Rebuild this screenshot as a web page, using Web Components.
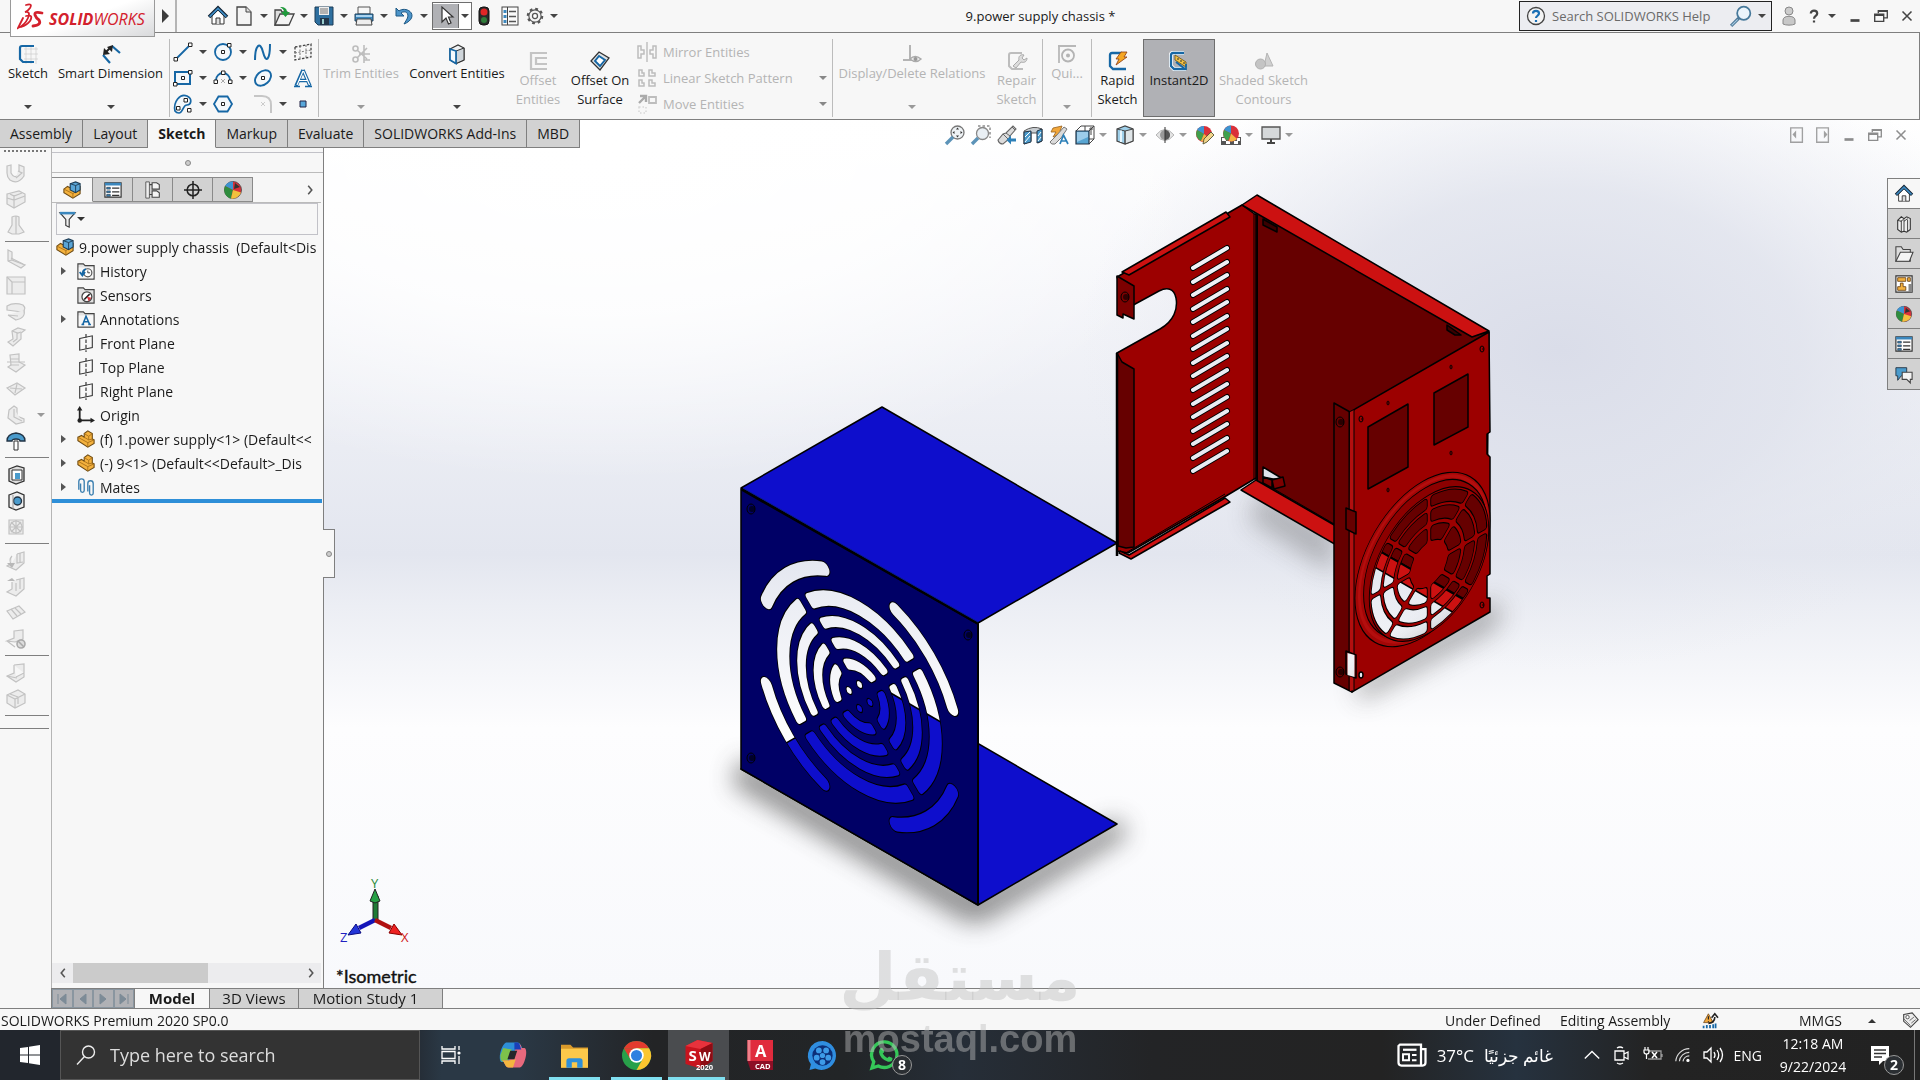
<!DOCTYPE html>
<html lang="en">
<head>
<meta charset="utf-8">
<title>SOLIDWORKS Premium 2020</title>
<style>
  html, body { height: 100%; margin: 0; }
  body {
    font: 14px/19px "Open Sans", "Noto Sans", sans-serif;
    color: #1a1a1a;
    background: #f7f7f7;
    overflow: hidden;
  }
</style>
</head>
<body>
<app-shell></app-shell>

<script>
const ICONS = {
  // title bar
  home: `<path d="M4 10v8h12v-8l-6-6z" fill="#fff" stroke="#333"/><path d="M8 18v-6h4v6" fill="#ddd" stroke="#333"/><path d="M1 11l9-9 9 9" fill="none" stroke="#123" stroke-width="3.6"/><path d="M1.600 10.600L10 2.400l8.400 8.200" fill="none" stroke="#3f8cc4" stroke-width="1.800"/>`,
  newdoc: `<path d="M3 1h9l5 5v13H3z" fill="#f4f4f4" stroke="#444" stroke-width="1.300"/><path d="M12 1v5h5" fill="#ddd" stroke="#444"/>`,
  open: `<path d="M1 4h6l1 2h5v13H1z" fill="#ddd" stroke="#444" stroke-width="1.300"/><path d="M1 19L6 8h14l-5 11z" fill="#f3f3f3" stroke="#444" stroke-width="1.300"/><path d="M6 1c5 0 7 2 7 5h3l-4.500 5L7 6h3c0-2-1-3-4-5z" fill="#1f9a3c"/>`,
  save: `<path d="M1 1h18v18H4l-3-3z" fill="#2e6f9f" stroke="#1c3d57"/><path d="M5 1h10v8H5z" fill="#eee"/><path d="M6 3h8M6 5h8M6 7h8" stroke="#777"/><path d="M6 12h9v7H6z" fill="#22364a"/><path d="M8 13h2v5H8z" fill="#9cc"/>`,
  print: `<path d="M4 1h12v7H4z" fill="#f6f6f6" stroke="#555"/><path d="M1 8h18v7H1z" fill="#3b87bd" stroke="#23435c"/><path d="M2 10h16" stroke="#a9d2ee" stroke-width="2"/><path d="M3 13h14l1 6H2z" fill="#eee" stroke="#444"/>`,
  undo: `<path d="M2 2v8h8L7 7c4-3 9 0 6 6l-3 5c8-3 10-9 6-12.500C13 3 8 2.500 5 5z" fill="#4c94c9" stroke="#1d5884"/>`,
  select: `<path d="M6 1v15l4-4 2.500 6 2.500-1-2.500-6H17z" fill="#fff" stroke="#333" stroke-width="1.200"/>`,
  light: `<rect x="5" y="1" width="10" height="18" rx="4" fill="#2a2a2a" stroke="#111"/><circle cx="10" cy="6" r="3.500" fill="#e02626"/><circle cx="10" cy="14" r="3" fill="#2f7d3a"/>`,
  options: `<rect x="2" y="1" width="16" height="18" fill="#fafafa" stroke="#444"/><path d="M7.500 1v18" stroke="#444"/><path d="M3.500 4h3v3h-3zM3.500 9h3v3h-3zM3.500 14h3v3h-3z" fill="#3b87bd"/><path d="M9 5.500h7M9 10.500h7M9 15.500h7" stroke="#555" stroke-width="1.500"/>`,
  gear: `<circle cx="10" cy="10" r="8" fill="none" stroke="#555" stroke-width="2.400" stroke-dasharray="3.100 3.180"/><circle cx="10" cy="10" r="6.800" fill="#f3f3f3" stroke="#555" stroke-width="1.300"/><circle cx="10" cy="10" r="2.800" fill="#fff" stroke="#555" stroke-width="1.400"/>`,
  help: `<circle cx="10" cy="10" r="8.500" fill="#f4f4f4" stroke="#444" stroke-width="1.300"/><path d="M7 7.500C7 4 13 4 13 7.500c0 2-3 2.500-3 4.500M10 14v2" fill="none" stroke="#1a6fb5" stroke-width="2.200"/>`,
  lens: `<circle cx="12.500" cy="7.500" r="6" fill="#eaf4fb" stroke="#47799b" stroke-width="1.600"/><path d="M8 12l-7 7" stroke="#4d7897" stroke-width="3"/><path d="M7 13l-5.500 5.500" stroke="#a8cbe2"/>`,
  person: `<circle cx="10" cy="5" r="4" fill="#ccc" stroke="#888"/><path d="M4 18v-4c0-5 12-5 12 0v4c-3 1.500-9 1.500-12 0z" fill="#c8c8c8" stroke="#888"/>`,
  question: `<path d="M6 7C6 2 14 2 14 7c0 3-4 3-4 6.500M10 15.500V18" fill="none" stroke="#444" stroke-width="2.800"/>`,
  minimize: `<path d="M5 15h10" stroke="#444" stroke-width="3"/>`,
  restore: `<path d="M7 7V4h10v8h-4" fill="none" stroke="#444" stroke-width="1.500"/><path d="M3 8h10v8H3z" fill="none" stroke="#444" stroke-width="1.500"/><path d="M3 9h10M7 4.500h10" stroke="#444" stroke-width="2"/>`,
  close: `<path d="M5 5l10 10M15 5L5 15" stroke="#444" stroke-width="1.700"/>`,
  // ribbon
  sketch: `<path d="M6 5h14M6 10h14M6 15h14M8 3v17M13 3v17M18 3v17" stroke="#ccc" stroke-width=".7"/><path d="M16 2H4Q2 2 2 4v11l3 3h11" fill="none" stroke="#1667a5" stroke-width="2.200"/>`,
  smartdim: `<path d="M2 11l7 8M11 2l8 7" stroke="#1667a5" stroke-width="2.200"/><path d="M4 9l6-6" stroke="#222" stroke-width="2"/><path d="M2 11l1-7 6 6zM12 1L6 3l5 5z" fill="#222"/>`,
  line: `<path d="M3 17L17 3" stroke="#1667a5" stroke-width="1.800"/><path d="M1 15.500h3.500V19H1zM15.500 1H19v3.500h-3.500z" fill="#fff" stroke="#222"/>`,
  circle: `<circle cx="10" cy="10" r="8" fill="#f4f8fb" stroke="#1667a5" stroke-width="1.800"/><path d="M8.500 8.500h3v3h-3zM14.500 1.500H18V5h-3.500z" fill="#fff" stroke="#222"/>`,
  spline: `<path d="M2 18C2 4 7-2 10 10s7 8 7-8" fill="none" stroke="#1667a5" stroke-width="2"/>`,
  plane: `<path d="M2 5l16-3v13L2 18z" fill="#f8f8f8" stroke="#444" stroke-dasharray="2.500 1.500" stroke-width="1.300"/><path d="M7 4v13M13 3v13M2 11l16-3" stroke="#777" stroke-dasharray="2 1.500"/>`,
  rect: `<path d="M2 4h15v12H2z" fill="#f4f8fb" stroke="#1667a5" stroke-width="2"/><path d="M8.500 8.500h3v3h-3zM15.500 2.500H19V6h-3.500zM.5 14.500H4V18H.5z" fill="#fff" stroke="#222"/>`,
  arc: `<path d="M3 12a7 7 0 0 1 14 0" fill="none" stroke="#1667a5" stroke-width="1.800"/><path d="M1 12h3.500v3.500H1zM15.500 12H19v3.500h-3.500zM8.500 3H12v3.500H8.500z" fill="#fff" stroke="#222"/><path d="M8 11l4 4M12 11l-4 4" stroke="#aaa"/>`,
  ellipse: `<ellipse cx="10" cy="10" rx="9" ry="6.500" transform="rotate(-42 10 10)" fill="#f4f8fb" stroke="#1667a5" stroke-width="1.900"/><path d="M8.500 8.500h3v3h-3z" fill="#fff" stroke="#222"/>`,
  text: `<path d="M10 2L3 18M10 2l7 16M5.500 12.500h9" fill="none" stroke="#1667a5" stroke-width="3.400"/><path d="M10 3L4 17M10.500 3l6 14M6 12.500h8" stroke="#fff" stroke-width="1.200"/><path d="M1 18.500h6M12 18.500h7" stroke="#1667a5" stroke-width="1.600"/>`,
  slot: `<path d="M2 17C0 8 7-1 14 2c6 3 4 9 0 9-4-.5-4 8-8 8-2 0-3-.5-4-2z" fill="#f4f8fb" stroke="#1667a5" stroke-width="1.700"/><path d="M11 4.500h3.500V8H11zM3.500 12.500H7V16H3.500zM14.500 14.500H18V18h-3.500z" fill="#fff" stroke="#222"/>`,
  polygon: `<path d="M5.500 2.500h9L19 10l-4.500 7.500h-9L1 10z" fill="#f4f8fb" stroke="#1667a5" stroke-width="1.800"/><path d="M8.500 8.500h3v3h-3z" fill="#fff" stroke="#222"/>`,
  fillet: `<path d="M1 2h8c6 0 9 3 9 9v8" fill="none" stroke="#c6c6c6" stroke-width="2"/><path d="M8 8l4 4M12 8l-4 4" stroke="#ccc"/>`,
  point: `<path d="M7 7h6v6H7z" fill="#59a7da" stroke="#224"/>`,
  trim: `<g fill="none" stroke="#bdbdbd" stroke-width="1.600"><circle cx="4.500" cy="4.500" r="2.500"/><circle cx="4.500" cy="15.500" r="2.500"/><path d="M6 6l10 9M6 14L16 4M13 1v18M8 10h11M13 16h6"/></g>`,
  convert: `<path d="M3 5l8-4 6 3v12l-8 3.500L3 16z" fill="#eef1f3" stroke="#333" stroke-width="1.200"/><path d="M9 7l8-3v12l-8 3.500z" fill="#cfd5da" stroke="#333"/><path d="M3 5l6 2v12.500L3 16z" fill="#f5fafd" stroke="#1667a5" stroke-width="1.700"/>`,
  offset: `<path d="M19 2H3v16h16M19 7H8v6h11" fill="none" stroke="#c4c4c4" stroke-width="2.200"/>`,
  surface: `<path d="M9 1l10 6-9 12L1 10z" fill="#dfe3e6" stroke="#333" stroke-width="1.300"/><path d="M9 5l6 4-5 6-5-5z" fill="#fff" stroke="#1667a5" stroke-width="1.900"/>`,
  mirror: `<path d="M10 0v20" stroke="#b8b8b8" stroke-width="1.300"/><path d="M1 4h3v4h3v4H4v4H1zM19 4h-3v4h-3v4h3v4h3z" fill="none" stroke="#bdbdbd" stroke-width="1.500"/>`,
  pattern: `<path d="M2 2v6h5V5H5V2zM12 2v6h6V5h-3V2zM2 12v6h5v-3H5v-3zM12 12v6h6v-3h-3v-3z" fill="none" stroke="#bdbdbd" stroke-width="1.500"/>`,
  move: `<path d="M12 3h7v6h-7z" fill="none" stroke="#bdbdbd" stroke-width="1.800"/><path d="M2 9l6-6M3 2h6v6" fill="none" stroke="#aaa" stroke-width="2.400"/><path d="M2 13h7v6H2z" fill="none" stroke="#d8d8d8" stroke-dasharray="1.500 2" stroke-width="1.500"/>`,
  relations: `<path d="M8 1v15M1 16h9" stroke="#b4b4b4" stroke-width="2"/><path d="M8 15q5-5 11 0-5 5-11 0z" fill="#eee" stroke="#aaa" stroke-width="1.400"/><circle cx="13.500" cy="15" r="2" fill="#999"/>`,
  repair: `<path d="M15 2H4Q2 2 2 4v11l3 3h11" fill="none" stroke="#bdbdbd" stroke-width="2"/><path d="M6 15l6-6c-1-4 2-6 5-5l-2 3 2 2 3-2c0 4-3 5-6 4l-5 6z" fill="#ddd" stroke="#aaa"/>`,
  quick: `<path d="M1 2h18M2 2v17" stroke="#b8b8b8" stroke-width="1.800"/><circle cx="11" cy="11.500" r="6" fill="none" stroke="#b4b4b4" stroke-width="1.800"/><circle cx="11" cy="11.500" r="2" fill="#b4b4b4"/>`,
  rapid: `<path d="M14 2H4Q2 2 2 4v11l3 3h13" fill="none" stroke="#1667a5" stroke-width="2.300"/><path d="M13 1h6l-3 5h3L8 14l3-6H8z" fill="#f5a623" stroke="#8c3a10" stroke-width=".8"/>`,
  instant: `<path d="M15 2H4Q2 2 2 4v11l3 3h12" fill="none" stroke="#fff" stroke-width="4"/><path d="M15 2H4Q2 2 2 4v11l3 3h12" fill="none" stroke="#1667a5" stroke-width="2.300"/><path d="M6 4l11 7v5L6 9z" fill="#f5c345" stroke="#6b5210" stroke-width=".8"/><path d="M9 7v2M12 9v2M15 11v2" stroke="#333"/><path d="M7 11l9 7M17 13v5h-5" fill="none" stroke="#1667a5" stroke-width="1.800"/>`,
  shaded: `<path d="M13 2l6 13h-9z" fill="#d0d0d0" stroke="#b4b4b4"/><circle cx="6.500" cy="13" r="5" fill="#c4c4c4" stroke="#b0b0b0"/>`,
  // heads-up view toolbar
  zoomfit: `<circle cx="12.500" cy="7.500" r="6.500" fill="#eef2f5" stroke="#777" stroke-width="1.300"/><path d="M8 12l-7 7" stroke="#5c93b8" stroke-width="3.400"/><path d="M12.500 2.500l1.500 2h-3zM12.500 12.500l1.500-2h-3zM7.500 7.500l2-1.500v3zM17.500 7.500l-2-1.500v3z" fill="#333"/>`,
  zoomarea: `<path d="M7 1h12v12" fill="none" stroke="#555" stroke-dasharray="2.500 2"/><circle cx="11.500" cy="8.500" r="6" fill="#e9eff4" stroke="#888" stroke-width="1.300"/><path d="M7 13l-6 6" stroke="#5c93b8" stroke-width="3.400"/>`,
  prevview: `<path d="M1 15l5-6 3-1 7-7 3 3-6 7-1 3-6 5q-4 0-5-4z" fill="#dcdcdc" stroke="#666" stroke-width="1.100"/><path d="M6 9l5 5M9 8l4 3M15 2l3 3" stroke="#666"/><path d="M19 15h-7" stroke="#2d80b8" stroke-width="3"/><path d="M14 10.500L9.500 15l4.500 4.500z" fill="#2d80b8"/>`,
  section: `<path d="M1 6q9-6 18-2v12l-4 2V8H8v8l-7 3z" fill="#c9ced2" stroke="#555"/><path d="M1 7l7-1v11l-7 2zM14 6l5-2v12l-5 2z" fill="#4a9bcc" stroke="#234"/><path d="M2 12l5-5M2 17l5-6M15 11l3-4M15 16l3-4" stroke="#fff"/>`,
  dynview: `<path d="M4 3l9-2-2 5 4 1-11 5 3-5H2z" fill="#f2a73b" stroke="#97601a" stroke-width=".8"/><path d="M1 17l6-6 8-9 3 2-6 9-6 6q-4 1-5-2z" fill="#dadada" stroke="#777"/><path d="M11 19l3.500-9L19 19M12.500 16h5" fill="none" stroke="#2d80b8" stroke-width="1.700"/>`,
  orient: `<path d="M6 1h13v13h-5" fill="#fff" stroke="#444"/><path d="M1 6l5-5M14 6l5-5M14 19l5-5M14 4h4M16 2v8M10 1v5" stroke="#444"/><path d="M1 6h13v13H1z" fill="#58a5d2" stroke="#234" stroke-width="1.200"/><path d="M2 7h11v5L2 17z" fill="#9cccea"/>`,
  display: `<path d="M2 4l8-3 8 3v12l-8 3-8-3z" fill="#9fd0ea" stroke="#444" stroke-width="1.200"/><path d="M10 6l8-2v12l-8 3z" fill="#dfe5e8" stroke="#444"/><path d="M2 4l8 2v13" fill="none" stroke="#444"/><path d="M6 5.500V17" stroke="#e8f6fd" stroke-width="2"/>`,
  eye: `<path d="M1 10q9-11 18 0-9 11-18 0z" fill="#e4e4e4" stroke="#b5b5b5"/><circle cx="10" cy="10" r="5" fill="#999"/><path d="M10 5a5 5 0 0 1 0 10z" fill="#555"/><path d="M10 2v16" stroke="#333"/>`,
  appearance: `<circle cx="9" cy="9" r="8" fill="#d9313a"/><path d="M9 9L2 5a8 8 0 0 1 7-4z" fill="#3d94d1"/><path d="M9 9L2 5a8 8 0 0 0 4 11z" fill="#3fa04c"/><path d="M9 9l-3 7a8 8 0 0 0 9-2z" fill="#f2b544"/><path d="M8 19l1-5 7-7 3 3-7 7z" fill="#f1d58a" stroke="#553" stroke-width=".9"/>`,
  scene: `<path d="M0 12h20v8H0z" fill="#555"/><path d="M1 13h4v3H1zM9 13h4v3H9zM16 13h3v3h-3zM5 16h4v3H5zM13 16h4v3h-4z" fill="#fff"/><circle cx="10" cy="8.500" r="8" fill="#d9313a"/><path d="M10 8.500L3 5a8 8 0 0 1 7-4.500z" fill="#3d94d1"/><path d="M10 8.500L3 5a8 8 0 0 0 4 11z" fill="#3fa04c"/><path d="M10 8.500l6 5.500a8 8 0 0 1-8 2z" fill="#f2b544"/>`,
  monitor: `<path d="M1 2h18v12H1z" fill="#d5d8da" stroke="#555" stroke-width="1.300"/><path d="M10 14v4M6 18h8" stroke="#444" stroke-width="2"/>`,
  dockleft: `<path d="M3 2h13v16H3z" fill="none" stroke="#666" stroke-width="1.500"/><path d="M9 5v9l-4-4.500z" fill="#666"/>`,
  dockright: `<path d="M3 2h13v16H3z" fill="none" stroke="#666" stroke-width="1.500"/><path d="M11 5v9l4-4.500z" fill="#666"/>`,
  // feature manager
  assembly: `<path d="M1 9l4-3 4 2V4l10 2v8l-8 5L1 13z" fill="#f4b13d" stroke="#6d4a12" stroke-width="1.200"/><path d="M1 9l10 5 8-5M11 14v5" fill="none" stroke="#a8701a"/><path d="M8 3l6-2 5 2v7l-5 3-6-3z" fill="#5aa5d6" stroke="#1d3c55" stroke-width="1.200"/><path d="M8 3l6 2v8M14 5l5-2" fill="none" stroke="#1d3c55"/>`,
  part: `<path d="M1 8l4-2 3 2V4l4-3 5 3v6l2 1v4l-7 4L1 12z" fill="#f4b13d" stroke="#6d4a12" stroke-width="1.200"/><path d="M1 8l11 6v5M8 8l5 3 4-1M8 4l5 3 4-3M13 7v4M12 14l7-3" fill="none" stroke="#a8701a"/>`,
  props: `<path d="M1 2h18v16H1z" fill="#fff" stroke="#333" stroke-width="1.300"/><path d="M1 2h18v3H1z" fill="#3b87bd"/><path d="M3 7h4v2H3zM3 11h4v2H3zM3 15h4v2H3z" fill="#3b87bd" stroke="#234" stroke-width=".7"/><path d="M9 8h8M9 12h8M9 16h8" stroke="#333" stroke-width="1.300"/>`,
  config: `<path d="M2 1h4v18H2z" fill="#eee" stroke="#555"/><path d="M6 4h4M6 15h4" stroke="#444" stroke-width="1.300"/><path d="M9 2h5l3 2v5H9zM9 11h5l3 2v5H9z" fill="#f4f4f4" stroke="#444" stroke-width="1.200"/>`,
  dimx: `<circle cx="10" cy="10" r="6.500" fill="none" stroke="#222" stroke-width="1.700"/><path d="M10 0v20M0 10h20" stroke="#222" stroke-width="1.700"/>`,
  sphere: `<circle cx="10" cy="10" r="8.500" fill="#d9313a" stroke="#444" stroke-width=".8"/><path d="M10 10L2 6a9 9 0 0 1 8-4.500z" fill="#3d94d1"/><path d="M10 10L2 6a9 9 0 0 0 6 12.500z" fill="#2f8d3e"/><path d="M10 10L8 18.500a9 9 0 0 0 10-6z" fill="#f2c23e"/><path d="M11 9l1-6 5 4z" fill="#333"/>`,
  filter: `<path d="M1 2h18l-7 8v9l-4-2v-7z" fill="#f0f0f0" stroke="#333" stroke-width="1.300"/><path d="M1 1h18v3H1z" fill="#3b87bd"/>`,
  history: `<path d="M1 2h6l2 2h10v15H1z" fill="#e3e3e3" stroke="#444" stroke-width="1.300"/><path d="M2 6h16v12H2z" fill="#f7f7f7"/><circle cx="12" cy="12" r="4.500" fill="#fff" stroke="#555" stroke-width="1.300"/><path d="M12 9.500V12h2.500" fill="none" stroke="#333"/><path d="M3 11l3 4 3-4M6 14q0-5 4-6" fill="none" stroke="#1667a5" stroke-width="1.900"/>`,
  sensor: `<path d="M1 2h6l2 2h10v15H1z" fill="#e3e3e3" stroke="#444" stroke-width="1.300"/><circle cx="11" cy="12" r="5.500" fill="#fff" stroke="#444" stroke-width="1.400"/><path d="M8 15l6-6" stroke="#222" stroke-width="1.800"/><path d="M11 12l5 1-3 4z" fill="#d9313a"/>`,
  annot: `<path d="M1 2h6l2 2h10v15H1z" fill="#e3e3e3" stroke="#444" stroke-width="1.300"/><path d="M2 6h16v12H2z" fill="#f7f7f7"/><path d="M6.500 16L10 7l4 9M8 13h4.500M5 16h3M12.500 16h3" fill="none" stroke="#1667a5" stroke-width="1.700"/>`,
  refplane: `<path d="M3 5l14-3v13L3 18z" fill="#f8f8f8" stroke="#333" stroke-width="1.200"/><path d="M10 0v20" stroke="#333" stroke-width="1.300" stroke-dasharray="4 2"/>`,
  origin: `<path d="M3 3v13h13" fill="none" stroke="#222" stroke-width="2"/><path d="M3 0l3 5H0zM20 16l-5 3v-6z" fill="#222"/><circle cx="3" cy="16" r="2.500" fill="#222"/>`,
  mates: `<path d="M2 13V4q0-3 3-3t3 3v10q0 2-2 2t-2-2V6M12 15V6q0-3 3-3t3 3v11q0 2-2 2t-2-2V8" fill="none" stroke="#3b7fb0" stroke-width="1.500"/>`,
  chevron: `<path d="M7 3l6 7-6 7" fill="none" stroke="#555" stroke-width="2.600"/>`,
  chevleft: `<path d="M13 3l-6 7 6 7" fill="none" stroke="#555" stroke-width="2.600"/>`,
  // sheet metal toolbar
  sm1: `<g class="dim"><path d="M1 3l4-1v8q3 6 8 2V2l5 2v9q-6 9-14 4-3-3-3-7z"/><path d="M12 8l4 2-6 5"/></g>`,
  sm2: `<g class="dim"><path d="M1 5l12-3 6 3v8l-11 6-7-4z"/><path d="M1 9l7 2 11-4M8 6v13M4 5l4 2 8-3"/></g>`,
  sm3: `<g class="dim"><path d="M6 2q4-2 7 0v8l5 7-5 2H6l-4-2 4-7z"/><path d="M10 1v18"/></g>`,
  sm4: `<g class="dim"><path d="M2 1l4 2v8l13 5-4 3L2 12z"/><path d="M6 11l-4 1M5 9l12 6"/></g>`,
  sm5: `<g class="dim"><path d="M1 2h18v17H1z"/><path d="M6 7h13M6 7v12M1 2l5 5"/></g>`,
  sm6: `<g class="dim"><path d="M1 5q7-4 16-1 4 4-1 7L1 9z"/><path d="M2 14l8 5q10-2 8-10M2 14l10 1"/></g>`,
  sm7: `<g class="dim"><path d="M6 4l6-3 7 2-4 3v6l-8 7-5-4 5-3z"/><path d="M6 4l6 2 3-1M11 6v6l-4 3"/></g>`,
  sm8: `<g class="dim"><path d="M4 2l9-1v8l6 3-9 7-8-5 3-2z"/><path d="M4 6h9M1 9h18M4 12h9"/></g>`,
  sm9: `<g class="dim"><path d="M1 9l10-5 8 5-10 7z"/><path d="M4 9l12 1M11 5l-2 9"/></g>`,
  sm10: `<g class="dim"><path d="M3 5l5-4 3 2v8l7 3v3l-8 2-8-6z"/><path d="M8 4v8l8 4"/></g>`,
  vent: `<path d="M1 10q0-7 9-8 9 1 9 8h-5q0-2-4-2t-4 2z" fill="#4a9bcc" stroke="#234" stroke-width="1.300"/><path d="M8 10h4v9H8z" fill="#fff" stroke="#333"/>`,
  cut1: `<path d="M3 4l8-3 7 2v13l-8 3-7-3z" fill="#ddd" stroke="#333" stroke-width="1.300"/><path d="M6 5h10v10H6z" fill="#fff" stroke="#333"/><path d="M9 8h5v6H9z" fill="#4a9bcc"/>`,
  cut2: `<path d="M3 4l8-3 7 3v12l-8 3-7-3z" fill="#eee" stroke="#333" stroke-width="1.300"/><circle cx="11.500" cy="10" r="4" fill="#4a9bcc" stroke="#234" stroke-width="1.400"/><path d="M7 4v14" stroke="#999"/>`,
  sm11: `<g class="dim"><path d="M3 3h14v14H3z"/><circle cx="10" cy="10" r="6"/><path d="M10 3v14M3 10h14M5 5l10 10M15 5L5 15"/></g>`,
  sm12: `<g class="dim"><path d="M11 3l7-2v11l-8 7-9-4 5-3"/><path d="M11 3v9l6-1M14 2v10M6 5q-4 4 0 10"/></g><path d="M1 12h8l-3 5z" fill="#b8b8b8"/>`,
  sm13: `<g class="dim"><path d="M10 3l8-2v11l-8 7-9-4 5-3V5"/><path d="M14 2v10M10 6v8"/></g><path d="M1 4h8l-3-3z" fill="#b8b8b8"/>`,
  sm14: `<g class="dim"><path d="M1 8l12-5 6 6-12 7z"/><path d="M5 6l6 7M9 5l6 6"/></g>`,
  sm15: `<g class="dim"><path d="M8 2l9-1v9L9 13 1 12l7-3zM1 12l8 6"/></g><circle cx="15" cy="15" r="4" fill="#ddd" stroke="#aaa" stroke-width="1.600"/><path d="M12 12l6 6" stroke="#aaa" stroke-width="1.600"/>`,
  sm16: `<g class="dim"><path d="M8 2l10-1v9l-8 4M8 2v8l-7 3 9 6 8-5v-4"/><path d="M1 13l10 2"/></g>`,
  sm17: `<g class="dim"><path d="M1 6l11-5 7 4v9l-10 5-8-5z"/><path d="M1 6l8 4 10-5M9 10v9M4 5l8 3M12 9v6"/></g>`,
  // task pane
  library: `<path d="M3 6l4-4 3 2 3-2 4 2v12l-4 3-3-1-3 1-4-3z" fill="#eee" stroke="#333" stroke-width="1.200"/><path d="M7 6v13M10 5v13M14 5v13M3 6l4 1 3-3M10 7l4-3" stroke="#333" fill="none"/>`,
  folder: `<path d="M1 2h6l2 3h8v13H1z" fill="#ddd" stroke="#444" stroke-width="1.200"/><path d="M1 18L6 8h14l-4 10z" fill="#f4f4f4" stroke="#444" stroke-width="1.200"/>`,
  palette: `<path d="M1 1h18v18H1z" fill="#fff" stroke="#333" stroke-width="1.300"/><path d="M3 3h9v4H3zM14 3h3v4h-3zM6 9h3v4h3v4H3v-4h3z" fill="#f4b13d" stroke="#70481a"/><path d="M15 10h4v9h-4z" fill="#888"/>`,
  forum: `<path d="M1 3h12v9H7l-4 5v-5H1z" fill="#4a9bcc" stroke="#234"/><path d="M8 8h11v8h-2v4l-4-4H8z" fill="#f4f4f4" stroke="#444" stroke-width="1.200"/>`,
  // status bar
  rebuild: `<path d="M2 12L8 1l6 11z" fill="#f2a73b" stroke="#70481a"/><path d="M8 4v4M8 10v1" stroke="#222" stroke-width="1.500"/><path d="M8 13q8-1 8-8M12 6l4-5 4 5" fill="none" stroke="#222" stroke-width="2"/><path d="M2 19v-3M6 19v-4M10 19v-4M14 19v-5M17 19v-6" stroke="#1667a5" stroke-width="2.200"/>`,
  tag: `<path d="M2 3l10-2 7 8-9 9-8-7z" fill="#ececec" stroke="#444" stroke-width="1.300"/><circle cx="6.500" cy="6" r="2" fill="#fff" stroke="#444"/><path d="M9 10l5-4M11 13l5-4M2 8l8 8" stroke="#555"/>`,
  // taskbar
  windows: `<path d="M0 3l8-1v7.500H0zM9 1.800L20 0v9.500H9zM0 10.500h8V18l-8-1zM9 10.500h11V20L9 18.200z" fill="#fff"/>`,
  find: `<circle cx="12.500" cy="7" r="6" fill="none" stroke="#eee" stroke-width="1.400"/><path d="M8.500 11.500L1 19.500" stroke="#eee" stroke-width="1.400"/>`,
  taskview: `<path d="M1 1v3h13V1M1 19v-3h13v3" fill="none" stroke="#fff" stroke-width="1.300"/><path d="M1 6.500h13v7H1zM18 1v4M18 11v8" fill="none" stroke="#fff" stroke-width="1.300"/><circle cx="18" cy="8" r="1.600" fill="#fff"/>`,
  copilot: `<path d="M5 1h8c3 0 3 5 5 5h-5L9 12 7 18c-2 0-3-1-3-3H2C-1 15 1 3 5 1z" fill="#2d8fd8"/><path d="M1 10c0 3 0 5 3 5h2l3-9-6-1z" fill="#7dc24b"/><path d="M15 19H7c-3 0-3-5-5-5h5l4-6 2-6c2 0 3 1 3 3h2c3 0 1 12-3 14z" fill="#e8697d"/><path d="M2 14h5l5-1-2 6H7c-3 0-3-5-5-5z" fill="#f4b63f"/><path d="M11 1h2c2 0 2 3 3 5h-5z" fill="#1a3fb8"/><path d="M8 7h5l-2 6H6z" fill="#26272a"/>`,
  explorer: `<path d="M0 2h7l2 2h11v15H0z" fill="#d99a2b"/><path d="M0 5h20v14H0z" fill="#fcc84a"/><path d="M4 19v-5q0-2 2-2h8q2 0 2 2v5h-4v-4H8v4z" fill="#2e8fd9"/>`,
  chrome: `<circle cx="10" cy="10" r="10" fill="#28a04a"/><path d="M1.300 5A10 10 0 0 1 18.700 5H10z" fill="#e33b2e"/><path d="M1.300 5L6 13l4-8z" fill="#e33b2e"/><path d="M18.700 5A10 10 0 0 1 10 20l4.500-8L10 5z" fill="#fbc62f"/><circle cx="10" cy="10" r="5" fill="#fff"/><circle cx="10" cy="10" r="3.800" fill="#2f80e0"/>`,
  sw2020: `<path d="M1 4l8-4 10 2v12l-8 5-10-3z" fill="#c8141e"/><path d="M1 4l8-4 10 2-8 4z" fill="#e8323c"/><path d="M11 6l8-4v12l-8 5z" fill="#8d0c14"/><text x="3" y="14" font-size="10" font-weight="700" fill="#fff">S</text><text x="10" y="14" font-size="8" font-weight="700" fill="#fff">W</text><text x="8" y="20" font-size="5" font-weight="700" fill="#fff">2020</text>`,
  autocad: `<path d="M1 0h17v14H1z" fill="#e02b3d"/><path d="M1 0h2v14H1z" fill="#f1808a"/><path d="M1 14h17v6H3z" fill="#8d0f26"/><text x="6" y="11" font-size="11" font-weight="700" fill="#fff">A</text><text x="6" y="19" font-size="5" font-weight="700" fill="#fff">CAD</text>`,
  film: `<path d="M10 0a10 10 0 1 1-5 19l-4 1 1-4A10 10 0 0 1 10 0z" fill="#2f8ee0"/><circle cx="10" cy="10" r="7" fill="#0c2f78"/><g fill="#3d9be8"><circle cx="10" cy="10" r="1.800"/><circle cx="7.500" cy="6.500" r="2"/><circle cx="12.500" cy="6.500" r="2"/><circle cx="6" cy="11.500" r="2"/><circle cx="14" cy="11.500" r="2"/><circle cx="10" cy="14.500" r="2"/></g>`,
  whatsapp: `<path d="M10 1.300a8.500 8.500 0 1 1-4.500 16L1.300 18.700 2.500 14.500A8.500 8.500 0 0 1 10 1.300z" fill="none" stroke="#35c759" stroke-width="2.200"/><path d="M6.500 6q1.500-2 2.500.5l.5 1.500-1 1q1 2 3 3l1.200-1 2.300 1q0 3-3 2.500Q6.500 12.500 6 8z" fill="#35c759"/>`,
  news: `<path d="M2 3h14v14H3q-2 0-2-2V4zM16 6h3v9q0 2-2 2h-2" fill="none" stroke="#fff" stroke-width="1.500"/><path d="M4 6.500h9" stroke="#fff" stroke-width="1.500"/><path d="M4 9.500h4v4H4zM10 10h3M10 13.500h3" fill="none" stroke="#fff" stroke-width="1.300"/>`,
  up: `<path d="M2 14l8-8 8 8" fill="none" stroke="#fff" stroke-width="1.500"/>`,
  meet: `<path d="M3 6h9v9H3zM12 9l4-2v7l-4-2M5 3q3-2 6 0M5 18q3 2 6 0" fill="none" stroke="#fff" stroke-width="1.300"/>`,
  battery: `<path d="M5 6h13v8H5M19 9v3" fill="none" stroke="#999" stroke-width="1.300"/><path d="M2 2v3M5 2v3M1 5h5v2q0 2-2.500 2T1 7zM3.500 9v5" fill="none" stroke="#fff" stroke-width="1.200"/><path d="M9 7l5 6M14 7l-5 6" stroke="#fff" stroke-width="1.500"/>`,
  wifi: `<path d="M2 17A15 15 0 0 1 17 3M6 17A11 11 0 0 1 17 7M10 17a7 7 0 0 1 7-6" fill="none" stroke="#ddd" stroke-width="1.300"/><circle cx="15.500" cy="16" r="1.800" fill="#fff"/>`,
  volume: `<path d="M1 7h3l4-4v14l-4-4H1z" fill="none" stroke="#fff" stroke-width="1.300"/><path d="M11 7q2 3 0 6M14 5q3.500 5 0 10M17 3q5 7 0 14" fill="none" stroke="#fff" stroke-width="1.300"/>`,
  notes: `<path d="M1 1h18v15h-6l-4 4v-4H1z" fill="#fff"/><path d="M4 5h12M4 8.500h12M4 12h8" stroke="#333" stroke-width="1.500"/>`
};

// Shared base: every element supplies css and markup
class SwElement extends HTMLElement {
  constructor() {
    super();
    this.attachShadow({ mode: "open" });
  }

  connectedCallback() {
    this.shadowRoot.innerHTML = `
      <style>
        *, *::before, *::after { box-sizing: border-box; }
        :host { display: block; box-sizing: border-box; }
        button {
          font: inherit; color: inherit; background: none;
          border: 0; margin: 0; padding: 0;
        }
        ${this.css()}
      </style>
      ${this.html()}
    `;
  }

  css() { return ""; }
  html() { return "<slot></slot>"; }
}

class SwIcon extends SwElement {
  css() {
    const size = this.getAttribute("size") || 20;
    return `
      :host { display: inline-block; flex: none; width: ${size}px; height: ${size}px; }
      svg { display: block; width: 100%; height: 100%; overflow: visible; }
      .dim { fill: #ececec; stroke: #c2c2c2; stroke-width: 1.2; }
    `;
  }

  html() {
    return `<svg viewBox="0 0 20 20" aria-hidden="true">${ICONS[this.getAttribute("name")] || ""}</svg>`;
  }
}

class ToolButton extends SwElement {
  css() {
    return `
      :host { display: flex; align-items: center; flex: none; }
      button { display: flex; align-items: center; justify-content: center; height: 26px; }
      .drop { width: 16px; margin-left: 2px; }
      .drop::before {
        content: ""; border: 4px solid transparent; border-top-color: var(--arrow, #444);
        border-bottom: 0;
      }
      :host([tight]) .drop { width: 10px; margin: 0; }
      :host([pressed]) { border: 1px solid #6e6e6e; background: #fff; }
      :host([pressed]) .main { width: 26px; height: 24px; background: #b0b1b5; border-right: 1px solid #6e6e6e; }
      :host([pressed]) .drop { width: 12px; margin: 0; }
    `;
  }

  html() {
    const label = this.getAttribute("label");
    const size = this.getAttribute("size") || 20;
    return `
      <button class="main" aria-label="${label}"><sw-icon name="${this.getAttribute("icon")}" size="${size}"></sw-icon></button>
      ${this.hasAttribute("drop") ? `<button class="drop" aria-label="${label} options"></button>` : ""}
    `;
  }
}

class SwTitlebar extends SwElement {
  css() {
    return `
      :host {
        display: flex; align-items: center; height: 33px; font-size: 13px;
        background: #f7f7f7; border-bottom: 1px solid #7f7f7f;
      }
      .logo {
        align-self: flex-start; display: flex; align-items: flex-start; flex: none;
        width: 145px; height: 37px; margin-left: 10px; padding: 2px 0 0 6px;
        background: linear-gradient(160deg, #fff 50%, #d9dadc);
        border: 1px solid #9a9a9a; border-top: 0; z-index: 1; color: #d3202c;
        font: italic 16px/26px "Open Sans", sans-serif; gap: 4px;
      }
      .logo svg { width: 28px; height: 31px; }
      .logo span { margin-top: 4px; }
      .play { width: 22px; height: 32px; border-right: 2px solid #b5b5b5; display: flex; align-items: center; padding-left: 7px; }
      .play::before { content: ""; border: 7px solid transparent; border-left-color: #3c3c3c; border-right: 0; }
      .tools { display: flex; align-items: center; margin-left: 31px; gap: 2px; }
      .start { margin-right: 4px; }
      .end { display: flex; align-items: center; gap: 6px; margin-left: 2px; }
      h1 { flex: 1; margin: 0; font-size: 13px; font-weight: 400; text-align: center; white-space: nowrap; }
      .search {
        display: flex; align-items: center; width: 253px; height: 30px; gap: 4px;
        padding: 0 1px 0 6px; border: 1px solid #222; background: #ecedf1; flex: none;
      }
      .search input {
        flex: 1; min-width: 0; border: 0; background: none; outline: 0; padding: 0 0 0 2px;
        font: inherit; color: #6a6a6a; appearance: none;
      }
      .search input::placeholder { color: #6a6a6a; opacity: 1; }
      .win { display: flex; align-items: center; margin-left: 4px; }
      .win button { display: flex; align-items: center; justify-content: center; width: 26px; height: 30px; }
      .win .q { margin: 0 2px 0 4px; }
    `;
  }

  html() {
    return `
      <div class="logo">
        <svg viewBox="0 0 28 31" fill="none" stroke="#d3202c" stroke-linecap="round" aria-hidden="true">
          <path d="M9 3q7-2 4 3-2 3-5 4 6-1 3 6-3 7-10 10l5-10" stroke-width="1.800"/>
          <path d="M25 11q-8-2-7 2 1 3 4 5 3 5-6 6" stroke-width="2.800"/>
          <path d="M9 14q8-2 4 5-3 4-9 6" stroke-width="1.800"/>
        </svg>
        <span><b>SOLID</b>WORKS</span>
      </div>
      <button class="play" aria-label="Show menu"></button>
      <div class="tools">
        <tool-button class="start" icon="home" label="Home"></tool-button>
        <tool-button icon="newdoc" label="New" drop></tool-button>
        <tool-button icon="open" label="Open" drop></tool-button>
        <tool-button icon="save" label="Save" drop></tool-button>
        <tool-button icon="print" label="Print" drop></tool-button>
        <tool-button icon="undo" label="Undo" drop></tool-button>
      </div>
      <tool-button icon="select" label="Select" drop pressed></tool-button>
      <div class="end">
        <tool-button icon="light" label="Rebuild"></tool-button>
        <tool-button icon="options" label="File properties"></tool-button>
        <tool-button icon="gear" label="Options" size="18" drop></tool-button>
      </div>
      <h1>9.power supply chassis *</h1>
      <label class="search">
        <sw-icon name="help"></sw-icon>
        <input type="search" placeholder="Search SOLIDWORKS Help" aria-label="Search SOLIDWORKS Help">
        <tool-button icon="lens" label="Search" size="22" drop></tool-button>
      </label>
      <div class="win">
        <button aria-label="Sign in"><sw-icon name="person"></sw-icon></button>
        <tool-button class="q" icon="question" label="Help" size="16" drop></tool-button>
        <button aria-label="Minimize"><sw-icon name="minimize" size="18"></sw-icon></button>
        <button aria-label="Restore"><sw-icon name="restore" size="18"></sw-icon></button>
        <button aria-label="Close"><sw-icon name="close" size="18"></sw-icon></button>
      </div>
    `;
  }
}

class RibbonCommand extends SwElement {
  css() {
    return `
      :host { flex: none; width: ${this.getAttribute("width")}px; }
      button {
        display: flex; flex-direction: column; align-items: center;
        width: 100%; height: 100%; padding: 5px 0 8px; line-height: 19px; white-space: nowrap;
      }
      :host([tall]) button { padding-top: 12px; }
      :host([tall]) span { white-space: normal; }
      :host([active]) button { background: #b0b1b5; border: 1px solid #6e6e6e; padding-top: 11px; }
      button:disabled { color: #b4b4b4; }
      i { margin-top: auto; border: 4px solid transparent; border-top-color: #444; border-bottom: 0; }
      button:disabled i { border-top-color: #999; }
    `;
  }

  html() {
    return `
      <button ${this.hasAttribute("off") ? "disabled" : ""}>
        <sw-icon name="${this.getAttribute("icon")}"></sw-icon>
        <span><slot></slot></span>
        ${this.hasAttribute("drop") ? "<i></i>" : ""}
      </button>
    `;
  }
}

class SwRibbon extends SwElement {
  css() {
    return `
      :host {
        display: flex; height: 87px; padding: 6px 0 2px; background: #f7f7f7; font-size: 13px;
        border-bottom: 1px solid #7f7f7f; border-right: 1px solid #7f7f7f;
      }
      hr { flex: none; width: 1px; height: auto; margin: 0; border: 0; background: #bcbcbc; }
      .entities {
        display: grid; grid-template-columns: 40px 40px 40px 20px; grid-auto-rows: 26px;
        align-items: center; margin: 0 5px 0 3px;
      }
      .gap { width: 4px; }
      .list { width: 197px; display: grid; grid-auto-rows: 26px; }
      .list button { display: flex; align-items: center; gap: 6px; padding: 0 5px 0 2px; color: #b4b4b4; text-align: left; }
      .list i { margin-left: auto; border: 4px solid transparent; border-top-color: #888; border-bottom: 0; }
    `;
  }

  html() {
    return `
      <ribbon-command width="56" icon="sketch" drop>Sketch</ribbon-command>
      <ribbon-command width="109" icon="smartdim" drop>Smart Dimension</ribbon-command>
      <div class="gap"></div>
      <hr>
      <div class="entities">
        <tool-button icon="line" label="Line" drop></tool-button>
        <tool-button icon="circle" label="Circle" drop></tool-button>
        <tool-button icon="spline" label="Spline" drop></tool-button>
        <tool-button icon="plane" label="Plane"></tool-button>
        <tool-button icon="rect" label="Rectangle" drop></tool-button>
        <tool-button icon="arc" label="Arc" drop></tool-button>
        <tool-button icon="ellipse" label="Ellipse" drop></tool-button>
        <tool-button icon="text" label="Text"></tool-button>
        <tool-button icon="slot" label="Slot" drop></tool-button>
        <tool-button icon="polygon" label="Polygon"></tool-button>
        <tool-button icon="fillet" label="Sketch fillet" drop></tool-button>
        <tool-button icon="point" label="Point"></tool-button>
      </div>
      <hr>
      <ribbon-command width="84" icon="trim" off drop>Trim Entities</ribbon-command>
      <ribbon-command width="108" icon="convert" drop>Convert Entities</ribbon-command>
      <ribbon-command width="54" icon="offset" off tall>Offset Entities</ribbon-command>
      <ribbon-command width="70" icon="surface" tall>Offset On Surface</ribbon-command>
      <div class="list">
        <button disabled><sw-icon name="mirror"></sw-icon>Mirror Entities</button>
        <button disabled><sw-icon name="pattern"></sw-icon>Linear Sketch Pattern<i></i></button>
        <button disabled><sw-icon name="move"></sw-icon>Move Entities<i></i></button>
      </div>
      <hr>
      <ribbon-command width="158" icon="relations" off drop>Display/Delete Relations</ribbon-command>
      <ribbon-command width="51" icon="repair" off tall>Repair Sketch</ribbon-command>
      <hr>
      <ribbon-command width="48" icon="quick" off drop>Qui...</ribbon-command>
      <hr>
      <ribbon-command width="51" icon="rapid" tall>Rapid Sketch</ribbon-command>
      <ribbon-command width="72" icon="instant" tall active>Instant2D</ribbon-command>
      <ribbon-command width="97" icon="shaded" off tall>Shaded Sketch Contours</ribbon-command>
    `;
  }
}

class CommandTabs extends SwElement {
  css() {
    return `
      :host { display: flex; height: 28px; }
      button {
        padding: 0 10px; background: #d2d2d2; white-space: nowrap;
        border-right: 1px solid #7f7f7f; border-bottom: 1px solid #7f7f7f;
      }
      .on { background: #f7f7f7; font-weight: 700; border-bottom-color: #f7f7f7; }
    `;
  }

  html() {
    return ["Assembly", "Layout", "Sketch", "Markup", "Evaluate", "SOLIDWORKS Add-Ins", "MBD"]
      .map(t => `<button role="tab" ${t === "Sketch" ? 'class="on" aria-selected="true"' : ""}>${t}</button>`)
      .join("");
  }
}

class ViewToolbar extends SwElement {
  css() {
    return `
      :host { display: flex; align-items: center; gap: 6px; height: 30px; padding-right: 4px; --arrow: #999; }
      tool-button[drop] { width: 34px; }
    `;
  }

  html() {
    const tools = [
      ["zoomfit", "Zoom to fit"], ["zoomarea", "Zoom to area"], ["prevview", "Previous view"],
      ["section", "Section view"], ["dynview", "Dynamic annotation views"],
      ["orient", "View orientation", 1], ["display", "Display style", 1], ["eye", "Hide/show items", 1],
      ["appearance", "Edit appearance"], ["scene", "Apply scene", 1], ["monitor", "View settings", 1]
    ];
    return tools.map(([icon, label, drop]) =>
      `<tool-button icon="${icon}" label="${label}" ${drop ? "drop" : ""}></tool-button>`).join("");
  }
}

class DocControls extends SwElement {
  css() {
    return `
      :host { display: flex; align-items: center; gap: 8px; height: 30px; padding-right: 10px; opacity: .6; }
    `;
  }

  html() {
    return [["dockleft", "Dock left"], ["dockright", "Dock right"], ["minimize", "Minimize document"],
      ["restore", "Restore document"], ["close", "Close document"]]
      .map(([icon, label]) => `<tool-button icon="${icon}" label="${label}" size="18"></tool-button>`).join("");
  }
}

class SideToolbar extends SwElement {
  css() {
    return `
      :host {
        display: flex; flex-direction: column; width: 52px; flex: none;
        background: #f7f7f7; border-right: 1px solid #b5b5b5;
      }
      .grip { height: 12px; margin: 0 3px; background: radial-gradient(circle, #777 1px, transparent 1px) 0 1px / 4px 4px repeat-x; }
      button { display: flex; align-items: center; height: 26px; padding-left: 6px; }
      button i { margin-left: 11px; border: 4px solid transparent; border-top-color: #999; border-bottom: 0; }
      hr { width: 44px; height: 1px; margin: 3px 0 4px 5px; border: 0; background: #7f7f7f; }
      .end { width: 49px; margin: 8px 0 0; }
    `;
  }

  html() {
    const groups = [
      ["sm1", "sm2", "sm3"],
      ["sm4", "sm5", "sm6", "sm7", "sm8", "sm9", "sm10", "vent"],
      ["cut1", "cut2", "sm11"],
      ["sm12", "sm13", "sm14", "sm15"],
      ["sm16", "sm17"]
    ];
    return `<div class="grip"></div>` + groups.map((g, n) =>
      g.map((icon, k) => `
        <button aria-label="Sheet metal tool ${n + 1}.${k + 1}">
          <sw-icon name="${icon}"></sw-icon>${icon === "sm10" ? "<i></i>" : ""}
        </button>`).join("") + "<hr>").join("") + `<hr class="end">`;
  }
}

class TreeItem extends SwElement {
  css() {
    return `
      :host { display: flex; align-items: center; height: 24px; padding-left: 9px; white-space: nowrap; }
      :host([root]) { padding-left: 4px; }
      .twist { width: 16px; flex: none; }
      .twist::before { content: ""; display: block; width: 0; }
      .open::before { border: 4px solid transparent; border-left: 5px solid #555; border-right: 0; }
      sw-icon { margin-right: 5px; }
    `;
  }

  html() {
    const twist = this.hasAttribute("root") ? ""
      : `<span class="twist ${this.hasAttribute("branch") ? "open" : ""}"></span>`;
    return `${twist}<sw-icon name="${this.getAttribute("icon")}" size="18"></sw-icon><slot></slot>`;
  }
}

class FeatureManager extends SwElement {
  css() {
    return `
      :host {
        position: relative; display: flex; flex-direction: column; flex: 1; min-width: 0;
        background: #f7f7f7; border-right: 1px solid #7f7f7f;
      }
      .top { height: 5px; border-bottom: 1px solid #c2c2c8; flex: none; }
      .handle { display: flex; align-items: center; justify-content: center; height: 20px; border-bottom: 1px solid #bbb; flex: none; }
      .dot { width: 6px; height: 6px; border: 1px solid #888; border-radius: 50%; background: #ccc; }
      nav { display: flex; align-items: stretch; height: 26px; margin: 4px 2px 0 0; flex: none; border-bottom: 1px solid #bbb; }
      nav button {
        display: flex; align-items: center; justify-content: center; width: 40px;
        background: #d2d2d2; border: 1px solid #8a8a8a; border-left: 0;
      }
      nav .on { background: #f7f7f7; width: 41px; border-bottom-color: #f7f7f7; }
      nav .more { margin-left: auto; width: 22px; background: none; border: 0; }
      .filter { display: flex; align-items: center; height: 32px; margin: 0 5px 0 4px; padding-left: 2px; border: 1px solid #c2c2c8; flex: none; --arrow: #333; }
      .tree { overflow: hidden; margin-right: 1px; }
      .rollback { height: 4px; background: #2e8fd8; }
      .scroll { display: flex; align-items: center; height: 20px; margin: auto 2px 5px 0; background: #ececee; flex: none; }
      .scroll button { width: 21px; height: 20px; display: flex; align-items: center; justify-content: center; }
      .thumb { width: 50%; height: 20px; background: #cbcbcb; }
      .scroll .r { margin-left: auto; }
      .split {
        position: absolute; left: 100%; top: 381px; width: 12px; height: 49px;
        display: flex; align-items: center; justify-content: center;
        background: #f7f7f7; border: 1px solid #7f7f7f; border-left: 0;
      }
    `;
  }

  html() {
    return `
      <div class="top"></div>
      <div class="handle"><span class="dot"></span></div>
      <nav>
        <button class="on" aria-label="Feature manager"><sw-icon name="assembly" size="18"></sw-icon></button>
        <button aria-label="Property manager"><sw-icon name="props" size="18"></sw-icon></button>
        <button aria-label="Configuration manager"><sw-icon name="config" size="18"></sw-icon></button>
        <button aria-label="DimXpert manager"><sw-icon name="dimx" size="18"></sw-icon></button>
        <button aria-label="Display manager"><sw-icon name="sphere"></sw-icon></button>
        <button class="more" aria-label="More tabs"><sw-icon name="chevron" size="12"></sw-icon></button>
      </nav>
      <div class="filter"><tool-button icon="filter" label="Filter" size="17" drop tight></tool-button></div>
      <div class="tree">
        <tree-item root icon="assembly">9.power supply chassis&nbsp; (Default&lt;Dis</tree-item>
        <tree-item branch icon="history">History</tree-item>
        <tree-item icon="sensor">Sensors</tree-item>
        <tree-item branch icon="annot">Annotations</tree-item>
        <tree-item icon="refplane">Front Plane</tree-item>
        <tree-item icon="refplane">Top Plane</tree-item>
        <tree-item icon="refplane">Right Plane</tree-item>
        <tree-item icon="origin">Origin</tree-item>
        <tree-item branch icon="part">(f) 1.power supply&lt;1&gt; (Default&lt;&lt;</tree-item>
        <tree-item branch icon="part">(-) 9&lt;1&gt; (Default&lt;&lt;Default&gt;_Dis</tree-item>
        <tree-item branch icon="mates">Mates</tree-item>
        <div class="rollback"></div>
      </div>
      <div class="scroll">
        <button aria-label="Scroll left"><sw-icon name="chevleft" size="12"></sw-icon></button>
        <div class="thumb"></div>
        <button class="r" aria-label="Scroll right"><sw-icon name="chevron" size="12"></sw-icon></button>
      </div>
      <button class="split" aria-label="Collapse panel"><span class="dot"></span></button>
    `;
  }
}

// Outline of one grille opening between two radii, kept g away from the spokes
function sector(r1, r2, a0, a1, g) {
  const rad = Math.PI / 180;
  const pt = (r, a) => `${(r * Math.cos(a)).toFixed(1)} ${(r * Math.sin(a)).toFixed(1)}`;
  const o1 = Math.asin(g / r1);
  const o2 = Math.asin(g / r2);
  a0 *= rad;
  a1 *= rad;
  return `M${pt(r2, a0 + o2)}A${r2} ${r2} 0 0 1 ${pt(r2, a1 - o2)}L${pt(r1, a1 - o1)}A${r1} ${r1} 0 0 0 ${pt(r1, a0 + o1)}Z`;
}

class ModelViewport extends SwElement {
  css() {
    return `
      :host { overflow: hidden; min-height: 0; }
      svg { display: block; width: 100%; height: 100%; }
      .edge { stroke: #000; stroke-width: 1.5; stroke-linejoin: round; }
      .thin { fill: none; stroke: #000; stroke-width: 1; }
      .triad { font: 13px "Open Sans", sans-serif; }
      .view { font: 18px "Lato", sans-serif; fill: #111; stroke: #111; stroke-width: .4; }
    `;
  }

  fan() {
    let d = "";
    for (const [r1, r2] of [[24, 34], [43, 53], [62, 72], [81, 95]]) {
      for (let a = -45; a < 315; a += 90) d += sector(r1 + 3, r2 - 3, a, a + 90, 8);
    }
    return d;
  }

  corners() {
    let d = "";
    for (let a = 45; a < 360; a += 90) {
      const p = t => `${(115 * Math.cos(t)).toFixed(1)} ${(115 * Math.sin(t)).toFixed(1)}`;
      const k = Math.PI / 180;
      d += `M${p((a - 24) * k)}A115 115 0 0 1 ${p((a + 24) * k)}`;
    }
    return d;
  }

  grille() {
    let d = "";
    for (const [r1, r2] of [[22, 37], [41, 53], [56, 67]]) {
      for (let a = 0; a < 360; a += 45) d += sector(r1 + 3, r2 - 3, a, a + 45, 5);
    }
    return d;
  }

  slots() {
    let d = "";
    for (let i = 0; i < 16; i++) {
      const y = Math.round(268 + i * 13.55);
      d += `M1193 ${y}L1227 ${y - 20}`;
    }
    return d;
  }

  screw(x, y, r, ring = "#000") {
    return `
      <ellipse cx="${x}" cy="${y}" rx="${r}" ry="${r + 1}" fill="none" stroke="${ring}"/>
      <ellipse cx="${x + 1}" cy="${y}" rx="${r - 1}" ry="${r - 1}" fill="${ring}" opacity=".6"/>`;
  }

  html() {
    const fan = this.fan(), corners = this.corners(), grille = this.grille(), slots = this.slots();
    const blueAt = 'transform="matrix(.866 .497 0 1 859.5 696.5)"';
    const redAt = 'transform="matrix(.866 -.5 0 1 1429 564)"';
    const hub = '<circle cx="-12" r="3"/><circle cx="12" r="3"/><circle cy="-12" r="3"/><circle cy="12" r="3"/>';
    return `
    <svg viewBox="0 120 1920 868" preserveAspectRatio="xMidYMid slice" role="img" aria-label="Power supply chassis, isometric view">
      <defs>
        <linearGradient id="sky" x2="0" y2="1">
          <stop offset="0" stop-color="#fff"/><stop offset=".2" stop-color="#f4f5f9"/>
          <stop offset=".5" stop-color="#e3e6ef"/><stop offset=".56" stop-color="#eceef4"/>
          <stop offset=".7" stop-color="#fdfdfe"/><stop offset="1" stop-color="#f8f9fc"/>
        </linearGradient>
        <radialGradient id="haze"><stop offset="0" stop-color="#dadde9"/><stop offset=".5" stop-color="#dfe2ec" stop-opacity=".8"/><stop offset="1" stop-color="#e8eaf1" stop-opacity="0"/></radialGradient>
        <radialGradient id="glow"><stop offset="0" stop-color="#fff"/><stop offset=".5" stop-color="#fff" stop-opacity=".8"/><stop offset="1" stop-color="#fff" stop-opacity="0"/></radialGradient>
        <filter id="soft" x="-20%" y="-20%" width="140%" height="140%"><feGaussianBlur stdDeviation="12"/></filter>
        <mask id="blueCut" maskUnits="userSpaceOnUse" x="700" y="400" width="450" height="520">
          <path d="M700 400h450v520H700z" fill="#fff"/>
          <g ${blueAt}>
            <path d="${fan}" stroke="#000" stroke-width="6" stroke-linejoin="round"/>
            <path d="${corners}" fill="none" stroke="#000" stroke-width="13" stroke-linecap="round"/>${hub}
          </g>
        </mask>
        <mask id="redCut" maskUnits="userSpaceOnUse" x="1300" y="300" width="220" height="420">
          <path d="M1300 300h220v420h-220z" fill="#fff"/>
          <path d="${grille}" ${redAt} stroke="#000" stroke-width="5" stroke-linejoin="round"/>
          <path d="M1347.500 653l7 2v22l-7-2z"/>
        </mask>
        <mask id="wallCut" maskUnits="userSpaceOnUse" x="1100" y="180" width="180" height="400">
          <path d="M1100 180h180v400h-180z" fill="#fff"/>
          <path d="${slots}" stroke="#000" stroke-width="4" stroke-linecap="round"/>
        </mask>
      </defs>

      <path d="M0 120h1920v868H0z" fill="url(#sky)"/>
      <ellipse cx="600" cy="150" rx="620" ry="330" fill="url(#glow)"/>
      <ellipse cx="1560" cy="350" rx="480" ry="320" fill="url(#haze)"/>

      <g filter="url(#soft)" opacity=".6">
        <path d="M741 758L978 893 1117 818 1128 835 984 922 966 922 732 784z" fill="#444"/>
        <path d="M1262 490L1334 530v44l-86-54z" fill="#555" opacity=".6"/>
        <path d="M1356 680L1490 600l14 10-10 20-134 72z" fill="#555" opacity=".7"/>
      </g>

      <!-- red chassis -->
      <path d="M1256 208L1472 336 1489 332 1486 600 1473 604 1256 481z" fill="#660000" class="edge"/>
      <path d="M1241 490l15-10 215 124-15 10z" fill="#cc1111" class="edge"/>
      <path d="M1262 482l208 121" class="thin"/>
      <g mask="url(#wallCut)">
        <path d="M1117 277L1242 205l14 10v263l-30 18-98 57-11-2V353l43-24c14-8 18-20 16-31-2-10-9-11-17-7l-33 18v-8z" fill="#9c0000" class="edge"/>
        <path d="${slots}" fill="none" stroke="#000" stroke-width="6" stroke-linecap="round"/>
      </g>
      <path d="M1254 214v265M1257.500 215v265" class="thin"/>
      <path d="M1122 272l104-60 4 5-101 58z" fill="#cc1111" class="edge"/>
      <path d="M1117 276l17 10v33l-11-5v4l-6-3z" fill="#7c0000" class="edge"/>
      ${this.screw(1125, 297, 4)}
      <path d="M1117 353l5 9 12 7v178l-8 1-8-2z" fill="#660000" class="edge"/>
      <path d="M1117 353v203" stroke="#000" stroke-width="2.500"/>
      <path d="M1120 551l9 4 96-57 5 4-99 57-12-6z" fill="#cc1111" class="edge"/>
      <path d="M1124 554l101-60" class="thin"/>
      <path d="M1257 195L1489 331l-17 6L1242 205z" fill="#cc1111" class="edge"/>
      <path d="M1263 219l14 8v5l-14-7zM1447 325l14 10h-6l-8-5z" fill="#3a0000" class="edge"/>
      <path d="M1263 467l20 12h-10l-10-2z" fill="#dfe2ea" class="edge"/>
      <path d="M1263 477l9 3v8l-9-5zM1272 480l11-3 2 9-11 3z" fill="#7c0000" class="edge"/>
      <g mask="url(#redCut)">
        <path d="M1334 403l16 9 2 280-18-9z" fill="#660000" class="edge"/>
        <path d="M1350 412L1489 332l1 100-3 2v20l3 3v117l-3 2v22h3v14l-138 80z" fill="#9c0000" class="edge"/>
        <path d="M1350 412l4-2v280l-4 1z" fill="#b30f0f"/>
        <path d="M1349 412v279M1354 410v280" class="thin"/>
        <g transform="matrix(.866 -.5 0 1 1422.500 559.500)">
          <circle r="78" fill="#a30606" stroke="#000"/>
          <circle cx="1" r="74" fill="none" stroke="#c41616" stroke-width="3" opacity=".5"/>
          <circle cx="3" cy="1" r="71" fill="#8c0000" stroke="#000"/>
        </g>
        <circle r="69" ${redAt} fill="#9c0000" stroke="#000"/>
        <path d="${grille}" ${redAt} fill="none" stroke="#000" stroke-width="7" stroke-linejoin="round"/>
        <path d="M1346 508l10 4v22l-10-5z" fill="#660000" class="edge"/>
        <path d="M1346 651l10 4v23l-10-4z" fill="none" class="edge"/>
      </g>
      <path d="M1368 427l40-23v63l-40 22z" fill="#660000" class="edge"/>
      <path d="M1434 393l34-19v53l-34 18z" fill="#660000" class="edge"/>
      ${this.screw(1340, 422, 4)}${this.screw(1340, 672, 4)}${this.screw(1361, 419, 2)}
      ${this.screw(1482, 349, 2)}${this.screw(1388, 403, 1)}${this.screw(1451, 367, 1)}
      ${this.screw(1451, 453, 1)}${this.screw(1388, 490, 1)}${this.screw(1482, 605, 2)}
      <ellipse cx="1361" cy="675" rx="2" ry="3" fill="#e8e8ee" class="edge"/>

      <!-- blue cover -->
      <path d="M741 769L882 688 1117 824 978 905z" fill="#0e0ecc" class="edge"/>
      <path d="M741 488L882 407 1117 543 978 623z" fill="#0e0ecc" class="edge"/>
      <g mask="url(#blueCut)">
        <path d="M741 489L978 624v281L741 769z" fill="#000066" class="edge"/>
        <g ${blueAt} fill="none" stroke="#000" stroke-width="8" stroke-linejoin="round" stroke-linecap="round">
          <path d="${fan}"/><path d="${corners}" stroke-width="15"/><g stroke-width="2">${hub}</g>
        </g>
      </g>
      <path d="M742 490L978 624v280" fill="none" stroke="#000" stroke-width="2"/>
      <path d="M743 488L978 622" stroke="#0b1d8c" stroke-width="1"/>
      ${this.screw(751, 509, 4)}${this.screw(968, 635, 4)}${this.screw(751, 758, 4)}

      <!-- orientation triad -->
      <g class="triad" stroke-linejoin="round">
        <path d="M373 896h5v24h-5z" fill="#1f7a35" stroke="#222"/>
        <path d="M375 889l5 12-5 2-5-2z" fill="#27a046" stroke="#222"/>
        <path d="M374 918l-16 8 2 4 16-8z" fill="#1414b8"/><path d="M348 935l8-11 5 9z" fill="#2336d8" stroke="#0a0a80"/>
        <path d="M376 918l16 8-2 4-16-8z" fill="#b01010"/><path d="M402 935l-8-11-5 9z" fill="#e22" stroke="#800"/>
        <text x="371" y="888" fill="#2a8a3a">Y</text>
        <text x="340" y="942" fill="#2020c0">Z</text>
        <text x="401" y="942" fill="#d01818">X</text>
      </g>
      <text class="view" x="336" y="983">*Isometric</text>
    </svg>
    `;
  }
}

class TaskPane extends SwElement {
  css() {
    return `
      :host { width: 33px; border: 1px solid #7f7f7f; border-right: 0; background: #d2d2d2; }
      button { display: flex; align-items: center; justify-content: center; width: 100%; height: 30px; border-bottom: 1px solid #7f7f7f; }
      button:first-child, style + button { background: #f7f7f7; }
      button:last-child { border-bottom: 0; }
    `;
  }

  html() {
    return [["home", "Resources"], ["library", "Design library"], ["folder", "File explorer"],
      ["palette", "View palette"], ["sphere", "Appearances"], ["props", "Custom properties"], ["forum", "Forum"]]
      .map(([icon, label]) => `<button aria-label="${label}"><sw-icon name="${icon}" size="18"></sw-icon></button>`).join("");
  }
}

class StudyTabs extends SwElement {
  css() {
    return `
      :host { display: flex; height: 21px; padding-left: 51px; background: #f7f7f7; border-bottom: 1px solid #7f7f7f; }
      .bar { display: flex; flex: 1; border-top: 1px solid #7f7f7f; border-left: 1px solid #7f7f7f; }
      .nav { display: flex; background: #b0b1b5; width: 83px; border-right: 1px solid #7f7f7f; }
      .nav button { flex: 1; display: flex; align-items: center; justify-content: center; border: 1px solid #8a96a0; }
      .nav svg { width: 12px; height: 12px; fill: #7d8b97; stroke: #7d8b97; }
      .tab { background: #d2d2d2; border-right: 1px solid #7f7f7f; font-size: 15px; line-height: 19px; }
      .on { width: 75px; background: #f7f7f7; font-weight: 700; }
      .views { width: 89px; }
      .motion { width: 144px; padding-right: 10px; }
    `;
  }

  html() {
    const arrows = [["First", "M2 1v10M10 1L4 6l6 5z"], ["Previous", "M9 1L3 6l6 5z"], ["Next", "M3 1l6 5-6 5z"], ["Last", "M10 1v10M2 1l6 5-6 5z"]];
    return `
      <div class="bar">
        <div class="nav">${arrows.map(([l, d]) => `<button aria-label="${l} tab"><svg viewBox="0 0 12 12"><path d="${d}"/></svg></button>`).join("")}</div>
        <button class="tab on">Model</button>
        <button class="tab views">3D Views</button>
        <button class="tab motion">Motion Study 1</button>
      </div>
    `;
  }
}

class StatusBar extends SwElement {
  css() {
    return `
      :host { display: flex; align-items: center; height: 21px; padding: 2px 1px 0; background: #f7f7f7; }
      .name { flex: 1; }
      .def { width: 115px; }
      .edit { width: 142px; }
      .unit { margin-left: 81px; width: 69px; }
      i { width: 34px; height: 4px; display: flex; }
      i::before { content: ""; border: 4px solid transparent; border-bottom-color: #333; border-top: 0; }
    `;
  }

  html() {
    return `
      <span class="name">SOLIDWORKS Premium 2020 SP0.0</span>
      <span class="def">Under Defined</span>
      <span class="edit">Editing Assembly</span>
      <sw-icon name="rebuild" size="16"></sw-icon>
      <span class="unit">MMGS</span><i></i>
      <sw-icon name="tag" size="17"></sw-icon>
    `;
  }
}

class WinTaskbar extends SwElement {
  css() {
    return `
      :host {
        display: flex; align-items: stretch; height: 50px; color: #fff;
        background: linear-gradient(90deg, #22262d 0, #22262d 21%, #2a3845 23%, #2a3845 27%, #232426 34%, #222527 44%, #262e38 50%, #232426 60%, #232323 72%, #26323f 79%, #232323 86%, #222 100%);
      }
      button { display: flex; align-items: center; justify-content: center; }
      .start { width: 60px; }
      .find {
        display: flex; align-items: center; width: 360px; gap: 12px; padding-left: 15px;
        background: #333; border: 1px solid #555;
      }
      .find input { flex: 1; min-width: 0; border: 0; outline: 0; background: none; font: 18px/24px "Open Sans", sans-serif; color: #ddd; }
      .find input::placeholder { color: #ddd; opacity: 1; }
      .apps { display: flex; }
      .apps button { position: relative; width: 61px; margin-right: 1px; }
      .run::after { content: ""; position: absolute; left: 5px; right: 5px; bottom: 0; height: 3px; background: #80dff0; }
      .on { background: #4a4c4f; }
      .on::after { left: 0; right: 4px; }
      .badge {
        position: absolute; left: 38px; top: 25px; width: 20px; height: 20px; border-radius: 50%;
        border: 1px solid #999; background: #2b2f33; font: 700 14px/18px "Open Sans", sans-serif; text-align: center;
      }
      .tray { display: flex; align-items: center; margin-left: auto; }
      .weather { display: flex; align-items: center; gap: 10px; font-size: 17px; margin-right: 29px; }
      .tray sw-icon { margin-right: 11px; }
      .weather sw-icon { margin-right: 0; }
      .clock { width: 86px; margin-left: 8px; text-align: center; line-height: 23px; }
      .note { position: relative; width: 58px; }
      .note sw-icon { margin: 0 10px 0 0; }
      .note .badge { left: 28px; top: 10px; }
      .desk { width: 6px; height: 50px; border-left: 1px solid #777; }
    `;
  }

  html() {
    return `
      <button class="start" aria-label="Start"><sw-icon name="windows"></sw-icon></button>
      <label class="find"><sw-icon name="find"></sw-icon><input type="text" placeholder="Type here to search" aria-label="Type here to search"></label>
      <div class="apps">
        <button aria-label="Task view"><sw-icon name="taskview"></sw-icon></button>
        <button aria-label="Copilot"><sw-icon name="copilot" size="28"></sw-icon></button>
        <button class="run" aria-label="File Explorer"><sw-icon name="explorer" size="27"></sw-icon></button>
        <button class="run" aria-label="Chrome"><sw-icon name="chrome" size="29"></sw-icon></button>
        <button class="run on" aria-label="SOLIDWORKS"><sw-icon name="sw2020" size="30"></sw-icon></button>
        <button aria-label="AutoCAD"><sw-icon name="autocad" size="30"></sw-icon></button>
        <button aria-label="Video player"><sw-icon name="film" size="29"></sw-icon></button>
        <button aria-label="WhatsApp"><sw-icon name="whatsapp" size="30"></sw-icon><span class="badge">8</span></button>
      </div>
      <div class="tray">
        <div class="weather"><sw-icon name="news" size="30"></sw-icon><span>37°C</span><span lang="ar" dir="rtl">غائم جزئيًا</span></div>
        <sw-icon name="up" size="18"></sw-icon>
        <sw-icon name="meet"></sw-icon>
        <sw-icon name="battery"></sw-icon>
        <sw-icon name="wifi" size="18"></sw-icon>
        <sw-icon name="volume"></sw-icon>
        <span>ENG</span>
        <div class="clock">12:18 AM<br>9/22/2024</div>
        <button class="note" aria-label="Notifications"><sw-icon name="notes"></sw-icon><span class="badge">2</span></button>
        <div class="desk"></div>
      </div>
    `;
  }
}

class SiteWatermark extends SwElement {
  css() {
    return `
      :host {
        position: absolute; left: 0; right: 0; bottom: 19px; pointer-events: none;
        text-align: center; color: rgba(191, 191, 191, .45);
      }
      .ar { font: 700 66px/78px "DejaVu Sans", sans-serif; }
      .en { font: 700 38px/44px "Liberation Sans", sans-serif; }
    `;
  }

  html() {
    return `<div class="ar" lang="ar" dir="rtl">مستقل</div><div class="en">mostaql.com</div>`;
  }
}

class AppShell extends SwElement {
  css() {
    return `
      :host { position: relative; display: flex; flex-direction: column; height: 100vh; }
      sw-titlebar, sw-ribbon, study-tabs, status-bar, win-taskbar { flex: none; }
      .work { flex: 1; min-height: 0; display: grid; grid-template-columns: 324px minmax(0, 1fr); grid-template-rows: 28px minmax(0, 1fr); }
      model-viewport { grid-area: 1 / 1 / 3 / 3; }
      command-tabs { grid-area: 1 / 1 / 2 / 3; justify-self: start; }
      view-toolbar { grid-area: 1 / 2; justify-self: center; }
      doc-controls { grid-area: 1 / 2; justify-self: end; }
      .left { grid-area: 2 / 1; display: flex; min-height: 0; }
      task-pane { grid-area: 2 / 2; justify-self: end; align-self: start; margin-top: 30px; }
    `;
  }

  html() {
    return `
      <sw-titlebar></sw-titlebar>
      <sw-ribbon></sw-ribbon>
      <div class="work">
        <model-viewport></model-viewport>
        <command-tabs role="tablist"></command-tabs>
        <view-toolbar></view-toolbar>
        <doc-controls></doc-controls>
        <div class="left">
          <side-toolbar></side-toolbar>
          <feature-manager></feature-manager>
        </div>
        <task-pane></task-pane>
      </div>
      <study-tabs></study-tabs>
      <status-bar></status-bar>
      <win-taskbar></win-taskbar>
      <site-watermark></site-watermark>
    `;
  }
}

customElements.define("sw-icon", SwIcon);
customElements.define("tool-button", ToolButton);
customElements.define("sw-titlebar", SwTitlebar);
customElements.define("ribbon-command", RibbonCommand);
customElements.define("sw-ribbon", SwRibbon);
customElements.define("command-tabs", CommandTabs);
customElements.define("view-toolbar", ViewToolbar);
customElements.define("doc-controls", DocControls);
customElements.define("side-toolbar", SideToolbar);
customElements.define("tree-item", TreeItem);
customElements.define("feature-manager", FeatureManager);
customElements.define("model-viewport", ModelViewport);
customElements.define("task-pane", TaskPane);
customElements.define("study-tabs", StudyTabs);
customElements.define("status-bar", StatusBar);
customElements.define("win-taskbar", WinTaskbar);
customElements.define("site-watermark", SiteWatermark);
customElements.define("app-shell", AppShell);
</script>
</body>
</html>
